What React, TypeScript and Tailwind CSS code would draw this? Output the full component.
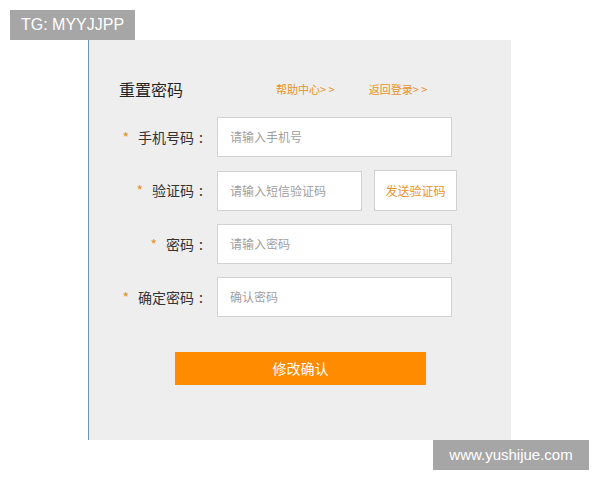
import React from "react";

const FONT = { fontFamily: '"Noto Sans CJK SC", "Liberation Sans", sans-serif' };

const rows = [
  { label: "手机号码", hint: "请输入手机号" },
  { label: "验证码", hint: "请输入短信验证码", code: true },
  { label: "密码", hint: "请输入密码" },
  { label: "确定密码", hint: "确认密码" },
];

export default function App() {
  return (
    <div className="relative h-[480px] w-[600px] bg-white" style={FONT}>
      {/* watermark top-left */}
      <div
        className="absolute left-[10px] top-[10px] flex h-[30px] w-[125px] items-center justify-center bg-[#a6a6a6] text-[16px] text-white"
        style={{ fontFamily: '"Liberation Sans", sans-serif' }}
      >
        TG: MYYJJPP
      </div>

      <div className="pl-[88px] pt-[40px]">
        <div className="h-[400px] w-[423px] border-l border-[#6f93b5] bg-[#eeeeee] pt-[37px]">
          <div className="flex items-center">
            <span className="ml-[30px] text-[16px] text-[#222]">重置密码</span>
            <span className="ml-[93px] text-[11px] text-[#e8922a]">帮助中心&gt; &gt;</span>
            <span className="ml-[34px] text-[11px] text-[#e8922a]">返回登录&gt; &gt;</span>
          </div>

          <div className="mt-[16px] flex flex-col gap-[13px]">
            {rows.map((r) => (
              <div key={r.label} className="flex items-center">
                <div className="flex w-[128px] items-center justify-end pr-[14px] text-[14px] text-[#333]">
                  <span className="mr-[9px] text-[#e8922a]">*</span>
                  <span>{r.label}</span>
                  <span className="ml-[5px]">:</span>
                </div>
                <div
                  className={`flex h-[40px] items-center border border-[#d2d2d2] bg-white pl-[12px] text-[12px] text-[#a0a0a0] ${
                    r.code ? "w-[145px]" : "w-[235px]"
                  }`}
                >
                  {r.hint}
                </div>
                {r.code && (
                  <div className="ml-[12px] flex h-[41px] w-[83px] items-center justify-center border border-[#d2d2d2] bg-white text-[12px] text-[#e8922a]">
                    发送验证码
                  </div>
                )}
              </div>
            ))}
          </div>

          <div className="ml-[86px] mt-[35px] flex h-[33px] w-[251px] items-center justify-center bg-[#ff8c00] text-[14px] text-white">
            修改确认
          </div>
        </div>
      </div>

      {/* watermark bottom-right */}
      <div
        className="absolute left-[433px] top-[440px] flex h-[30px] w-[156px] items-center justify-center bg-[#a6a6a6] text-[15px] text-white"
        style={{ fontFamily: '"Liberation Sans", sans-serif' }}
      >
        www.yushijue.com
      </div>
    </div>
  );
}
